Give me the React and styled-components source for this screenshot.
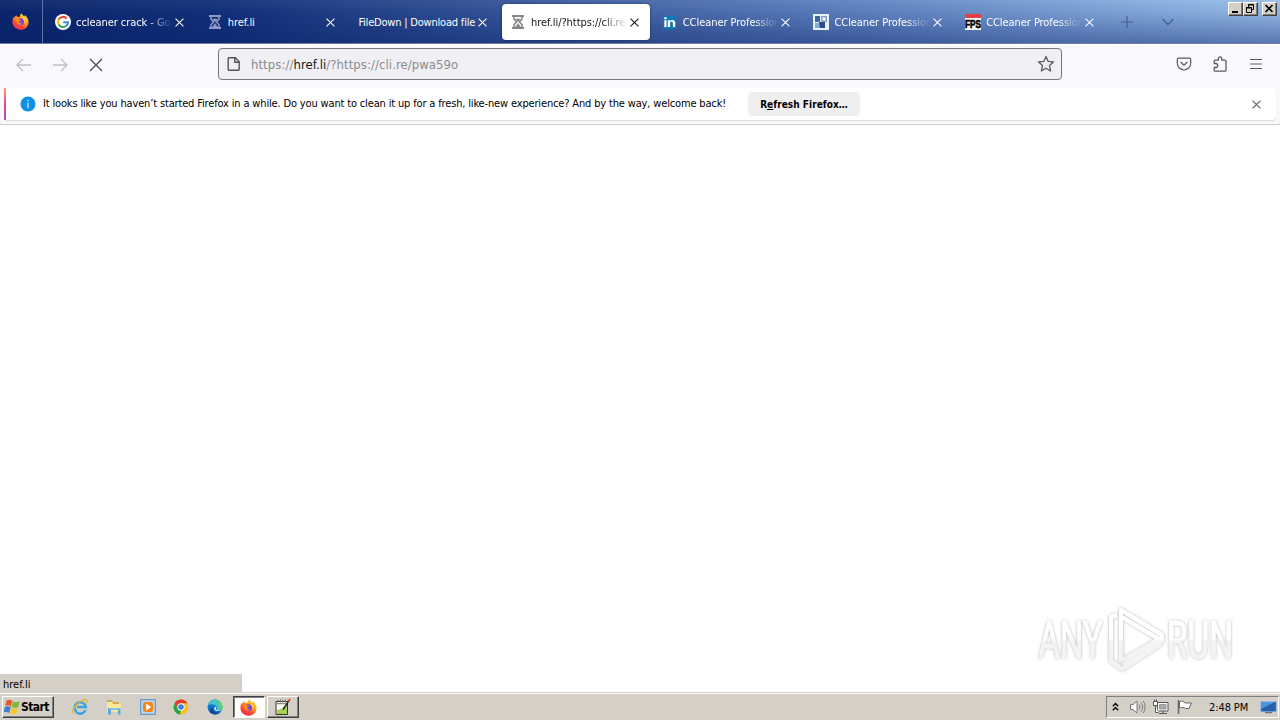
import React from "react";
import styled, { createGlobalStyle, css } from "styled-components";

const GlobalStyles = createGlobalStyle`
  * {
    box-sizing: border-box;
  }

  body {
    margin: 0;
    background: #fff;
    color: #000;
    font: 11px/14px "DejaVu Sans Condensed", "DejaVu Sans", sans-serif;
    overflow: hidden;
  }

  svg {
    display: block;
    flex: none;
  }
`;

const Desktop = styled.div`
  display: flex;
  flex-direction: column;
  width: 1280px;
  height: 720px;
`;

/* ---------- tab strip ---------- */

const TabStrip = styled.div`
  display: flex;
  flex: none;
  height: 44px;
  border-bottom: 1px solid #6d7e9f;
  background: linear-gradient(to bottom, rgba(255, 255, 255, 0.05), rgba(10, 36, 106, 0.08) 30%, rgba(8, 32, 105, 0.44)),
    linear-gradient(97deg, #0a246a 0%, #12307a 18%, #3a5a9c 42%, #6285c2 68%, #8db2e2 92%, #9bbfea 100%);
`;

const PinnedButton = styled.div`
  display: flex;
  align-items: center;
  justify-content: center;
  width: 43px;
  height: 43px;
  padding-right: 2px;
  border-right: 1px solid #5f73a6;
`;

const Tabs = styled.div`
  display: flex;
  margin-left: 2px;
`;

const Tab = styled.div`
  display: flex;
  align-items: center;
  width: 147.7px;
  height: 36px;
  margin: 4px 2px 3px;
  padding: 0 8px;
  border-radius: 4px;
  color: #fff;

  ${props =>
    props.$active &&
    css`
      background: #fff;
      color: #15141a;
      box-shadow: 0 0 3px rgba(0, 0, 0, 0.4);
    `}
`;

const TabIcon = styled.div`
  width: 16px;
  height: 16px;
  margin-right: 5px;
`;

const TabLabel = styled.div`
  flex: 1;
  overflow: hidden;
  padding-top: 2px;
  margin-right: ${props => (props.$fade ? 3 : 0)}px;
  white-space: nowrap;
  line-height: 16px;
  letter-spacing: ${props => props.$spacing || 0}px;
  mask-image: ${props => (props.$fade ? "linear-gradient(to left, transparent, #000 24px)" : "none")};
`;

const TabClose = styled.div`
  width: 10px;
  margin-right: 2px;
`;

const StripButton = styled.div`
  display: flex;
  align-items: center;
  justify-content: center;
  width: 40.500px;
  height: 44px;
`;

const WindowButtons = styled.div`
  display: flex;
  margin: 2px 3px 0 auto;
`;

const raised = css`
  border: 1px solid;
  border-color: #fff #404040 #404040 #fff;
  box-shadow: inset -1px -1px #808080;
  background: #d4d0c8;
`;

const WindowButton = styled.div`
  ${raised}
  width: 15px;
  height: 14px;
  margin-left: ${props => props.$gap || 0}px;
`;

/* ---------- navigation bar ---------- */

const NavBar = styled.div`
  display: flex;
  flex: none;
  align-items: center;
  height: 44px;
  padding: 0 16px;
  background: #f9f9fb;
  box-shadow: inset 0 2px #fff;
`;

const NavGroup = styled.div`
  display: flex;
  gap: 20px;
  width: 202px;
  padding-bottom: 3px;
  padding-top: 1px;
`;

const UrlBar = styled.div`
  display: flex;
  align-items: center;
  width: 844px;
  height: 32px;
  margin-bottom: 4px;
  padding: 0 6px 0 7px;
  border: 1px solid #74747b;
  border-radius: 4px;
  background: #f0f0f4;
`;

const Url = styled.div`
  flex: 1;
  margin-left: 9px;
  padding-top: 1px;
  color: #8b8b91;
  font: 13px/18px "DejaVu Sans Condensed", sans-serif;
  letter-spacing: 0.06px;

  span {
    color: #15141a;
  }
`;

const ToolGroup = styled.div`
  display: flex;
  gap: 20px;
  margin-left: auto;
  padding-bottom: 4px;
`;

/* ---------- notification ---------- */

const NotificationBox = styled.div`
  flex: none;
  height: 37px;
  padding: 0 4px;
  border-bottom: 1px solid #ccccce;
  background: #f9f9fb;
`;

const Notification = styled.div`
  display: flex;
  align-items: center;
  height: 32px;
  padding: 0 13px 0 0;
  border-radius: 4px;
  background: #fff;
  box-shadow: 0 1px 1px rgba(58, 57, 68, 0.15);
`;

const AccentBar = styled.div`
  width: 2px;
  height: 32px;
  margin-right: 14px;
  background: linear-gradient(#ff9a6c, #e84a8c 50%, #a54ad0);
`;

const NotificationText = styled.div`
  width: 705px;
  margin-left: 7px;
  white-space: nowrap;
  letter-spacing: ${props => props.$spacing || 0}px;
`;

const RefreshButton = styled.div`
  width: 112px;
  height: 24px;
  border-radius: 4px;
  background: #efeff0;
  font-weight: bold;
  font-size: 10px;
  line-height: 25px;
  letter-spacing: 0.04px;
  text-align: center;
`;

const NotificationClose = styled.div`
  margin-left: auto;
  padding-right: 2px;
`;

/* ---------- page ---------- */

const Page = styled.div`
  display: flex;
  flex: 1;
  align-items: flex-end;
  justify-content: space-between;
  padding-right: 40px;
`;

const StatusLabel = styled.div`
  width: 242px;
  height: 18px;
  padding-left: 3px;
  background: #d4d0c8;
  line-height: 21px;
  letter-spacing: 0;
`;

const Watermark = styled.div`
  margin-bottom: 14px;
`;

/* ---------- taskbar ---------- */

const Taskbar = styled.div`
  display: flex;
  flex: none;
  align-items: flex-start;
  height: 28px;
  padding: 3px 1px 0 2px;
  border-top: 1px solid #d4d0c8;
  background: #d4d0c8;
  box-shadow: inset 0 1px #fff;
`;

const StartButton = styled.div`
  ${raised}
  display: flex;
  align-items: center;
  width: 52px;
  height: 22px;
  padding-left: 1px;
  font-size: 12px;
  font-weight: bold;
  letter-spacing: -0.6px;
`;

const QuickLaunch = styled.div`
  display: flex;
  margin-left: 10px;
`;

const TaskButton = styled.div`
  display: flex;
  align-items: center;
  justify-content: center;
  width: 32px;
  height: 22px;
  margin-right: 1.8px;

  ${props => props.$raised && raised}

  ${props =>
    props.$pressed &&
    css`
      border: 1px solid;
      border-color: #404040 #fff #fff #404040;
      box-shadow: inset 1px 1px #808080;
      background: #fdfdfc;
    `}
`;

const Tray = styled.div`
  display: flex;
  align-items: center;
  width: 173px;
  height: 22px;
  margin-left: auto;
  padding-left: 5px;
  border: 1px solid;
  border-color: #808080 #fff #fff #808080;
`;

const TrayItem = styled.div`
  margin-right: ${props => props.$after}px;
`;

const Clock = styled.div`
  width: 51px;
  padding-top: 1px;
  white-space: nowrap;
  letter-spacing: -0.1px;
`;

/* ---------- icons ---------- */

const Cross = ({ size = 9, color = "#fff", width = 1.2 }) => (
  <svg width={size} height={size} viewBox="0 0 10 10" stroke={color} strokeWidth={width} fill="none">
    <path d="M.6.6l8.8 8.8M9.4.6L.6 9.4" />
  </svg>
);

const FirefoxIcon = () => (
  <svg width="17" height="17" viewBox="0 0 16 16">
    <defs>
      <linearGradient id="fx" x1="0.85" y1="0" x2="0.2" y2="1">
        <stop offset="0" stopColor="#fff04a" />
        <stop offset="0.4" stopColor="#ff9a1f" />
        <stop offset="0.7" stopColor="#ff4a32" />
        <stop offset="1" stopColor="#e5225f" />
      </linearGradient>
    </defs>
    <path fill="url(#fx)" d="M9 .2c.4 1.4 1.7 2 2.7 3.1.3-.4.3-1 .2-1.5 2 1.3 3.8 3.8 3.7 6.8-.1 4.100-3.400 7.200-7.600 7.200S.4 12.500.4 8.300c0-2 .6-3.700 1.500-4.900l.4 1.100c.4-1 1-1.900 1.800-2.600 0 .8.2 1.300.6 1.700 1-.2 2-.2 2.900.2C7.200 2.600 7.900 1 9 .2z" />
    <circle cx="8" cy="8.300" r="3.300" fill="#7542e5" />
    <path fill="#ff8a16" d="M3.400 5.300c1.400-.5 2.500 0 3.200.8.6.3 1.400.3 2.100.4-.3.8-1.600 1-1.900 1.700 0 1.400 1.500 2 3 1.400-1 1.600-3.200 1.900-4.600.8-1.600-1.300-2.300-3.200-1.800-5.100z" />
    <path fill="#ffcf35" d="M10.300 3.500c2.700 1.800 3.500 5 1.800 7.600.3-2.200-.2-3.600-1.300-4.700-.8-.9-1-1.900-.5-2.900z" />
  </svg>
);

const GoogleIcon = () => (
  <svg width="16" height="16" viewBox="0 0 16 16">
    <circle cx="8" cy="8" r="8" fill="#fff" />
    <g fill="none" strokeWidth="2.100">
      <path stroke="#ea4335" d="M3.700 5.400a5 5 0 0 1 7.900-1" />
      <path stroke="#fbbc05" d="M3.700 10.500a5 5 0 0 1 0-5.100" />
      <path stroke="#34a853" d="M11.300 11.800a5 5 0 0 1-7.600-1.300" />
      <path stroke="#4285f4" d="M8.200 8.200h4.800c0 1.500-.6 2.800-1.700 3.600" />
    </g>
  </svg>
);

const HourglassIcon = ({ color }) => (
  <svg width="16" height="16" viewBox="0 0 16 16" fill="none" stroke={color}>
    <path d="M2 2h12M2 14h12" strokeWidth="2" />
    <path d="M4 3v2.200L6.500 8 4 10.800V13M12 3v2.200L9.500 8l2.500 2.800V13" strokeWidth="1.500" />
    <path d="M5.500 5h5L8 8zM5.500 13L8 9.500l2.500 3.500z" fill={color} strokeWidth=".5" />
  </svg>
);

const LinkedInIcon = () => (
  <svg width="16" height="16" viewBox="0 0 16 16">
    <rect x="1" y="2" width="13" height="13" rx="1" fill="#0a7bb5" />
    <path fill="#fff" d="M2.300 6.200h2.300V13H2.300zM2.300 3.200h2.300v2H2.300zM5.800 6.200h2.200v1c1-1.700 5.200-1.700 5.200 1.600V13h-2.300V9.300c0-2-2.800-1.900-2.800 0V13H5.800z" />
  </svg>
);

const TilesIcon = () => (
  <svg width="16" height="16" viewBox="0 0 16 16">
    <path fill="#e9f1fa" d="M0 0h16v16H0z" />
    <path fill="#3a67a8" d="M2 2h5v6H2z" />
    <path fill="#7d9fd0" d="M8 2h6v6H8z" />
    <path fill="#fff" d="M9.500 3.500h3v3h-3z" />
    <path fill="#8aa9d4" d="M2 9h5v5H2z" />
    <path fill="#294d91" d="M6 8h6v6H7z" />
  </svg>
);

const FpsIcon = () => (
  <svg width="16" height="16" viewBox="0 0 16 16">
    <path fill="#f5f5f5" d="M0 0h16v16H0z" />
    <path fill="#e93e42" d="M0 0h16v4H0z" />
    <text x="0" y="13.500" textLength="16" lengthAdjust="spacingAndGlyphs" fontFamily="Liberation Sans" fontWeight="bold" fontSize="10" stroke="#000" strokeWidth=".6">
      FPS
    </text>
  </svg>
);

const ArrowIcon = ({ flip }) => (
  <svg width="16" height="16" viewBox="0 0 16 16" fill="none" stroke="#bdbdc3" strokeWidth="1.300">
    <path d={flip ? "M1 8h14M9 2l6 6-6 6" : "M15 8H1M7 2L1 8l6 6"} />
  </svg>
);

const PageIcon = () => (
  <svg width="16" height="16" viewBox="0 0 16 16" fill="none" stroke="#515158" strokeWidth="1.400">
    <path d="M3.200 1.700h6l4 4v7.600c0 .6-.4 1-1 1h-9c-.6 0-1-.4-1-1V2.700c0-.6.400-1 1-1z" />
    <path d="M8.800 2v4.200H13" />
  </svg>
);

const StarIcon = () => (
  <svg width="18" height="18" viewBox="0 0 18 18" fill="none" stroke="#5b5b66" strokeWidth="1.300" strokeLinejoin="round">
    <path d="M9 1.500l2.200 4.900 5.300.6-4 3.600 1.100 5.400L9 13.300 4.400 16l1.100-5.400-4-3.600 5.300-.6z" />
  </svg>
);

const PocketIcon = () => (
  <svg width="16" height="16" viewBox="0 0 16 16" fill="none" stroke="#5b5b66" strokeWidth="1.200" strokeLinecap="round">
    <path d="M2.600 2.200h10.800c.8 0 1.300.5 1.300 1.300v3.800a6.700 6.700 0 0 1-13.400 0V3.500c0-.8.5-1.300 1.300-1.300z" />
    <path d="M4.800 6.300L8 9.300l3.200-3" />
  </svg>
);

const ExtensionIcon = () => (
  <svg width="16" height="16" viewBox="0 0 16 16" fill="none" stroke="#5b5b66" strokeWidth="1.300" strokeLinejoin="round">
    <path d="M2.200 7.500V5c0-.6.300-.9.900-.9h3.300V2.600a1.700 1.700 0 0 1 3.400 0v1.500h3.300c.6 0 .9.300.9.900v9.200c0 .6-.3.900-.9.900h-10c-.6 0-.9-.3-.9-.9v-2.700h1.500a1.900 1.900 0 0 0 0-4z" />
  </svg>
);

const MenuIcon = () => (
  <svg width="16" height="16" viewBox="0 0 16 16" stroke="#5b5b66" strokeWidth="1.200">
    <path d="M2 3.500h12M2 8h12M2 12.500h12" />
  </svg>
);

const InfoIcon = () => (
  <svg width="16" height="16" viewBox="0 0 16 16">
    <circle cx="8" cy="8" r="7.500" fill="#0a90e6" />
    <path d="M7.300 3.800h1.400v1.500H7.300zM7.300 6.500h1.400v5.700H7.300z" fill="#bfe4ff" />
  </svg>
);

const WindowsIcon = () => (
  <svg width="17" height="18" viewBox="1 1 14 14">
    <path fill="#e8582c" d="M3.200 2.600C5 1.500 6.300 1.900 7.900 2.900L6.700 7.500C5.100 6.500 3.700 6.300 2 7.200z" />
    <path fill="#7fb83a" d="M8.500 3.200c1.700 1 3.300 1 5.500 0l-1.200 4.700c-2 1-3.800.9-5.500-.1z" />
    <path fill="#3c7fcb" d="M1.800 7.900c1.700-.9 3.100-.7 4.700.3l-1.200 4.700c-1.600-1-3-1.200-4.700-.3z" />
    <path fill="#f8c52c" d="M7.100 8.500c1.700 1 3.500 1.100 5.500.1l-1.200 4.600c-2 1-3.900 1-5.500 0z" />
  </svg>
);

const ExplorerIcon = () => (
  <svg width="18" height="18" viewBox="0 0 18 18" fill="none">
    <path d="M14.500 12.200a5.700 5.700 0 1 1 .4-3.200H6" stroke="#39a7df" strokeWidth="2.500" />
    <path d="M2.500 15.500c-3.500-2 3.500-11.500 11-13.800 3.700-.9 3.300 1.600 1.700 3.600" stroke="#e7b72e" strokeWidth="1.300" />
  </svg>
);

const FolderIcon = () => (
  <svg width="18" height="18" viewBox="0 0 18 18">
    <path fill="#d9a93b" d="M2 2h5l1 2h6v3H2z" />
    <path fill="#fbe597" d="M2 4h5l1 2h8v8H2z" />
    <path fill="#8bd166" d="M3 3h3v1H3z" />
    <path fill="#59a9df" d="M3 10h12.500v6.500H13V12H6v4.500H3z" />
    <path fill="#a8d9f2" d="M4 10.500h10.500v1H4z" />
  </svg>
);

const PlayerIcon = () => (
  <svg width="16" height="16" viewBox="0 0 16 16">
    <rect x=".7" y=".7" width="14.600" height="14.600" fill="#b8d7ee" stroke="#568db9" />
    <rect x="3" y="3" width="10" height="10" rx="2.500" fill="#f58515" />
    <path d="M6.200 4.500v7l5-3.500z" fill="#fff" />
  </svg>
);

const ChromeIcon = () => (
  <svg width="16" height="16" viewBox="0 0 16 16">
    <circle cx="8" cy="8" r="7.500" fill="#fbc116" />
    <path fill="#e33b2e" d="M1.500 4.300a7.500 7.500 0 0 1 13 0H8l-3.200 5.500z" />
    <path fill="#28a34b" d="M1.500 4.300l3.300 5.600L8 11.700l-1 3.800A7.500 7.500 0 0 1 1.500 4.300z" />
    <circle cx="8" cy="8" r="3.700" fill="#fff" />
    <circle cx="8" cy="8" r="2.800" fill="#377fe5" />
  </svg>
);

const EdgeIcon = () => (
  <svg width="16" height="16" viewBox="0 0 16 16">
    <circle cx="8" cy="8" r="7.500" fill="#1673cd" />
    <path fill="#43c4c9" d="M.6 7A7.500 7.500 0 0 1 15.500 8c0 2.300-1.700 3.400-3.600 3.400-1.700 0-2.800-.7-2.500-1.400.9-1.700.4-3.500-1.900-4.100C4.900 5.200 1.500 5.400.6 7z" />
    <path fill="#65d65f" d="M9.500.7c3.500.7 6 3.700 6 7.300 0 2.100-1.400 3.200-3 3.400 1.400-4-.5-8-3-10.700z" />
    <path fill="#0c4a95" d="M5.700 8.500c-.5 3 2.500 5.500 7.500 4.900A7.500 7.500 0 0 1 3.500 14c-1.500-2.500-.2-5 2.200-5.500z" />
    <path fill="#e6f5fa" d="M8.300 7.500c1.100.8.8 2 .3 2.800.6 1.200 3.600 1.500 5.600.5-2 2.100-6.500 1.300-6.900-.6-.1-1 .3-1.900 1-2.700z" />
  </svg>
);

const NotepadIcon = () => (
  <svg width="18" height="18" viewBox="0 0 18 18">
    <path d="M2 3.500h11.500v13H2z" fill="#f7f9ee" stroke="#30342c" />
    <path d="M3 12l4-1 6-4v9H3z" fill="#a5cf55" />
    <path d="M3 5.700h9M4 1.500v3M6.500 1.500v3M9 1.500v3M11.500 1.500v3" stroke="#737373" />
    <path d="M9 11.500L15 2.500" stroke="#222" strokeWidth="1.400" />
    <path d="M14.500 3.500L16 1" stroke="#e34f31" strokeWidth="2" />
  </svg>
);

const TrayChevron = () => (
  <svg width="7" height="10" viewBox="0 0 7 10" fill="none" stroke="#000" strokeWidth="1.400">
    <path d="M.8 4.300L3.500 1.500l2.700 2.800M.8 8.300l2.700-2.800 2.700 2.800" />
  </svg>
);

const SpeakerIcon = () => (
  <svg width="17" height="16" viewBox="0 0 17 16" fill="none" stroke="#77777a">
    <path d="M1.500 5.500h2.700L8 2v12l-3.800-3.500H1.500z" fill="#fff" />
    <path d="M10 5.500c1 1.500 1 3.500 0 5M12 3.500c2 2.700 2 6.300 0 9M14.200 2c2.500 3.500 2.500 8.500 0 12" />
  </svg>
);

const NetworkIcon = () => (
  <svg width="16" height="16" viewBox="0 0 16 16" fill="#fff" stroke="#55555a">
    <path d="M4.500 3.500h10.500v8.500H4.500z" />
    <path d="M6.500 5.500h6.500v4.500H6.500z" fill="#aaa" stroke="#999" />
    <path d="M6 14.500h8M10 12v2.500M2.500 6.500v7h3" />
    <path d="M.5 2.500h4v4h-4zM1.500.5v2M3.500.5v2" />
  </svg>
);

const FlagIcon = () => (
  <svg width="17" height="16" viewBox="0 0 17 16" fill="#fff" stroke="#66666a">
    <path d="M2.500 1v14" strokeWidth="1.500" />
    <path d="M3.500 2.500c3-1 4 0 5.500 1.500h6.500L13 9.500H9.500C8 8.500 6 8.200 3.500 9z" />
  </svg>
);

const DesktopIcon = () => (
  <svg width="17" height="16" viewBox="0 0 17 16">
    <path fill="#2460ad" stroke="#acc4df" strokeWidth=".7" d="M.7 2.500h15.600v10.300H.7z" />
    <path fill="#4c95dc" d="M1 3h14L1 10z" />
    <path fill="#64707c" d="M5 13h7v1.200H5z" />
  </svg>
);

const AnyRunMark = () => (
  <svg width="208" height="74" viewBox="1032 604 208 74">
    <defs>
      <linearGradient id="mark" gradientUnits="userSpaceOnUse" x1="0" y1="608" x2="0" y2="672">
        <stop offset="0.480" stopColor="#fff" />
        <stop offset="0.530" stopColor="#f3f3f3" />
      </linearGradient>
      <filter id="soft" x="-20%" y="-20%" width="140%" height="140%">
        <feDropShadow dx="0" dy="0" stdDeviation="1.700" floodColor="#000" floodOpacity="0.340" />
      </filter>
    </defs>
    <g filter="url(#soft)" fill="url(#mark)" stroke="url(#mark)" strokeWidth=".7" fontFamily="Roboto, sans-serif" fontSize="52">
      <text x="1038.500" y="657.500" textLength="64" lengthAdjust="spacingAndGlyphs">ANY</text>
      <text x="1167" y="657.500" textLength="66" lengthAdjust="spacingAndGlyphs">RUN</text>
      <g fill="none" strokeWidth="4" strokeLinejoin="round">
        <path d="M1117 615l-6 2v44l11 8 39-25" />
        <path d="M1121 662v-52l41 25v6l-39 24" />
        <path d="M1122 617l37 22-36 21" />
      </g>
    </g>
  </svg>
);

const tabs = [
  { label: "ccleaner crack - Google", icon: <GoogleIcon />, fade: true },
  { label: "href.li", icon: <HourglassIcon color="#8d9bc4" /> },
  { label: "FileDown | Download file" },
  { label: "href.li/?https://cli.re/pwa59o", icon: <HourglassIcon color="#85858a" />, fade: true, active: true },
  { label: "CCleaner Professional", icon: <LinkedInIcon />, fade: true },
  { label: "CCleaner Professional", icon: <TilesIcon />, fade: true },
  { label: "CCleaner Professional", icon: <FpsIcon />, fade: true }
];

const App = () => (
  <Desktop>
    <GlobalStyles />
    <TabStrip>
      <PinnedButton>
        <FirefoxIcon />
      </PinnedButton>
      <Tabs>
        {tabs.map((tab, i) => (
          <Tab key={i} $active={tab.active}>
            {tab.icon && <TabIcon>{tab.icon}</TabIcon>}
            <TabLabel $fade={tab.fade} $spacing={tab.icon ? -0.06 : -0.2}>
              {tab.label}
            </TabLabel>
            <TabClose>
              <Cross color={tab.active ? "#15141a" : "#fff"} />
            </TabClose>
          </Tab>
        ))}
      </Tabs>
      <StripButton>
        <svg width="12" height="12" viewBox="0 0 12 12" stroke="#4a5f8a" strokeWidth="1.200">
          <path d="M6 0v12M0 6h12" />
        </svg>
      </StripButton>
      <StripButton>
        <svg width="12" height="8" viewBox="0 0 12 8" fill="none" stroke="#4a5f8a" strokeWidth="1.300">
          <path d="M.5 1L6 6.500 11.500 1" />
        </svg>
      </StripButton>
      <WindowButtons>
        <WindowButton>
          <svg width="13" height="12">
            <path d="M3 8h6v2H3z" />
          </svg>
        </WindowButton>
        <WindowButton>
          <svg width="13" height="12" fill="none" stroke="#000">
            <path d="M4.500 4V1.500h5v5H8M4 2h6" />
            <path d="M2.500 4.500h5v5h-5zM2 5h6" />
          </svg>
        </WindowButton>
        <WindowButton $gap={4}>
          <svg width="13" height="12" stroke="#000" strokeWidth="1.700">
            <path d="M2.500 2l7 7M9.500 2l-7 7" />
          </svg>
        </WindowButton>
      </WindowButtons>
    </TabStrip>
    <NavBar>
      <NavGroup>
        <ArrowIcon />
        <ArrowIcon flip />
        <svg width="16" height="16" viewBox="0 0 16 16" stroke="#4a4a52" strokeWidth="1.300">
          <path d="M2 2l12 12M14 2L2 14" />
        </svg>
      </NavGroup>
      <UrlBar>
        <PageIcon />
        <Url>
          https://<span>href.li</span>/?https://cli.re/pwa59o
        </Url>
        <StarIcon />
      </UrlBar>
      <ToolGroup>
        <PocketIcon />
        <ExtensionIcon />
        <MenuIcon />
      </ToolGroup>
    </NavBar>
    <NotificationBox>
      <Notification>
        <AccentBar />
        <InfoIcon />
        <NotificationText $spacing={-0.155}>
          It looks like you haven’t started Firefox in a while. Do you want to clean it up for a fresh, like-new
          experience? And by the way, welcome back!
        </NotificationText>
        <RefreshButton>
          R<u>e</u>fresh Firefox…
        </RefreshButton>
        <NotificationClose>
          <Cross color="#5b5b66" />
        </NotificationClose>
      </Notification>
    </NotificationBox>
    <Page>
      <StatusLabel>href.li</StatusLabel>
      <Watermark>
        <AnyRunMark />
      </Watermark>
    </Page>
    <Taskbar>
      <StartButton>
        <WindowsIcon />
        Start
      </StartButton>
      <QuickLaunch>
        <TaskButton>
          <ExplorerIcon />
        </TaskButton>
        <TaskButton>
          <FolderIcon />
        </TaskButton>
        <TaskButton>
          <PlayerIcon />
        </TaskButton>
        <TaskButton>
          <ChromeIcon />
        </TaskButton>
        <TaskButton>
          <EdgeIcon />
        </TaskButton>
        <TaskButton $pressed>
          <FirefoxIcon />
        </TaskButton>
        <TaskButton $raised>
          <NotepadIcon />
        </TaskButton>
      </QuickLaunch>
      <Tray>
        <TrayItem $after={10}>
          <TrayChevron />
        </TrayItem>
        <TrayItem $after={7}>
          <SpeakerIcon />
        </TrayItem>
        <TrayItem $after={7}>
          <NetworkIcon />
        </TrayItem>
        <TrayItem $after={16}>
          <FlagIcon />
        </TrayItem>
        <Clock>2:48 PM</Clock>
        <DesktopIcon />
      </Tray>
    </Taskbar>
  </Desktop>
);

export default App;
